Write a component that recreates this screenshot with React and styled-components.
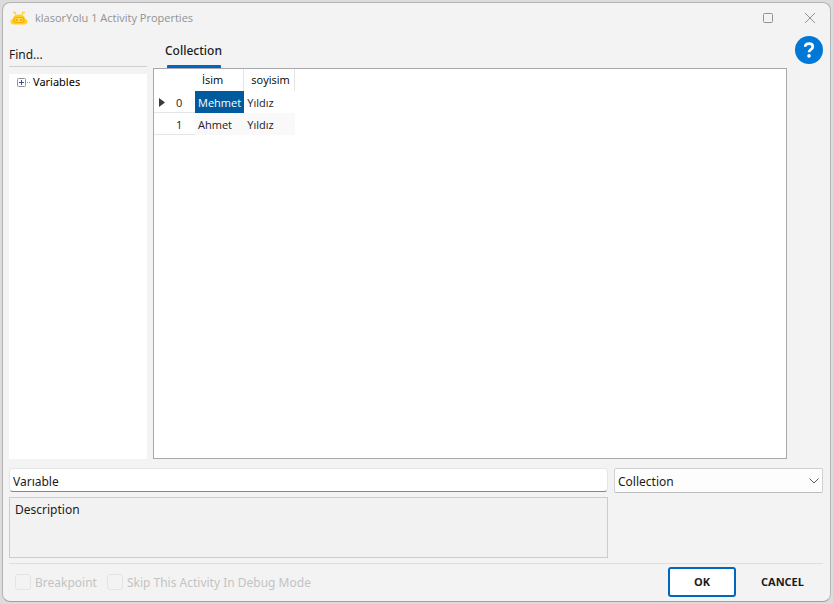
import React, { useState } from 'react'
import styled, { createGlobalStyle } from 'styled-components'

const rows = [
  { isim: 'Mehmet', soyisim: 'Yıldız' },
  { isim: 'Ahmet', soyisim: 'Yıldız' },
]

const RobotIcon = () => (
  <svg width="18" height="18" viewBox="0 0 18 18" fill="none" aria-hidden="true">
    <path d="M3 3.500H5.500V6M15 3.500H12.500V6" stroke="#fbd24a" strokeWidth="1.300" />
    <path d="M3 10C3 7 5.500 5.500 9 5.500s6 1.500 6 4.500c1.700 0 2.500 1 2.500 2.500S16.300 15.500 14 15.500H4C1.700 15.500 .5 14 .5 12.500S1.300 10 3 10z" fill="#ffd21f" />
    <rect x="4" y="8.500" width="10" height="5" rx="2.500" fill="#ffdf5c" stroke="#f5ad00" strokeWidth="1.200" />
    <circle cx="6.800" cy="11" r="1.300" fill="#f5ad00" />
    <circle cx="11.200" cy="11" r="1.300" fill="#f5ad00" />
  </svg>
)

const App = () => {
  const [find, setFind] = useState('')
  const [variable, setVariable] = useState('Varıable')
  const [type, setType] = useState('Collection')

  return (
    <>
      <GlobalStyle />
      <Window>
        <TitleBar>
          <RobotIcon />
          <Title>klasorYolu 1 Activity Properties</Title>
          <WindowButton aria-label="Maximize">
            <svg width="12" height="12" viewBox="0 0 12 12" fill="none" stroke="#929292">
              <rect x="1.5" y="1.5" width="9" height="9" rx="1" />
            </svg>
          </WindowButton>
          <WindowButton aria-label="Close">
            <svg width="12" height="12" viewBox="0 0 12 12" fill="none" stroke="#929292">
              <path d="M1 1L11 11M11 1L1 11" />
            </svg>
          </WindowButton>
        </TitleBar>

        <Main>
          <Sidebar>
            <FindInput
              aria-label="Find"
              placeholder="Find..."
              value={find}
              onChange={(e) => setFind(e.target.value)}
            />
            <Tree>
              <TreeNode>
                <svg width="14" height="9" viewBox="0 0 14 9" fill="none" aria-hidden="true">
                  <rect x="0.5" y="0.5" width="8" height="8" rx="1" fill="#fff" stroke="#929292" />
                  <path d="M2 4.500H7M4.500 2V7" stroke="#34529c" />
                  <path d="M10 4.500H11M12 4.500H13" stroke="#929292" />
                </svg>
                Variables
              </TreeNode>
            </Tree>
          </Sidebar>

          <TabArea>
            <TabBar>
              <Tab>Collection</Tab>
            </TabBar>
            <TabPanel>
              <DataTable>
                <thead>
                  <tr>
                    <Corner />
                    <HeadCell>İsim</HeadCell>
                    <HeadCell>soyisim</HeadCell>
                  </tr>
                </thead>
                <tbody>
                  {rows.map((row, i) => (
                    <Row key={i} $alt={i % 2 === 1}>
                      <RowHead>
                        <RowHeadContent>
                          <svg width="6" height="9" viewBox="0 0 6 9" aria-hidden="true">
                            {i === 0 && <path d="M0 0L6 4.500L0 9z" fill="#3b3b3b" />}
                          </svg>
                          <span>{i}</span>
                        </RowHeadContent>
                      </RowHead>
                      <Cell $selected={i === 0}>{row.isim}</Cell>
                      <Cell>{row.soyisim}</Cell>
                    </Row>
                  ))}
                </tbody>
              </DataTable>
            </TabPanel>
          </TabArea>

          <HelpButton aria-label="Help">
            <svg width="28" height="28" viewBox="0 0 28 28" fill="none">
              <circle cx="14" cy="14" r="14" fill="#0078d7" />
              <path d="M10.200 10.800C10.200 8.600 11.700 7.600 14 7.600s3.800 1.100 3.800 3.100c0 2.900-3.800 2.700-3.800 5.600" stroke="#fff" strokeWidth="2.700" />
              <circle cx="14" cy="19.900" r="1.800" fill="#fff" />
            </svg>
          </HelpButton>
        </Main>

        <Form>
          <TextField
            aria-label="Variable name"
            value={variable}
            onChange={(e) => setVariable(e.target.value)}
          />
          <SelectBox>
            <Select aria-label="Variable type" value={type} onChange={(e) => setType(e.target.value)}>
              <option>Collection</option>
            </Select>
            <svg width="10" height="6" viewBox="0 0 10 6" fill="none" stroke="#5c5c5c" aria-hidden="true">
              <path d="M0.500 0.500L5 5L9.500 0.500" />
            </svg>
          </SelectBox>
          <Description aria-label="Description" defaultValue="Description" />
        </Form>

        <Footer>
          <CheckLabel>
            <Checkbox type="checkbox" disabled />
            Breakpoint
          </CheckLabel>
          <CheckLabel>
            <Checkbox type="checkbox" disabled />
            Skip This Activity In Debug Mode
          </CheckLabel>
          <Buttons>
            <Button $primary>OK</Button>
            <Button>CANCEL</Button>
          </Buttons>
        </Footer>
      </Window>
    </>
  )
}

export default App

/* ---------------- Global ---------------- */

const GlobalStyle = createGlobalStyle`
  * {
    box-sizing: border-box;
  }

  body {
    margin: 0;
    background: #dcdcdc;
    color: #1b1b1b;
    font-family: "Noto Sans", "Open Sans", sans-serif;
    font-size: 12px;
  }

  button, input, select, textarea {
    font: inherit;
    color: inherit;
  }
`

/* ---------------- Window ---------------- */

const Window = styled.div`
  display: flex;
  flex-direction: column;
  min-height: calc(100vh - 4px);
  margin: 2px;
  padding: 0 7px 4px 6px;
  border: 1px solid #b4b4b4;
  border-bottom-color: #a0a0a0;
  border-radius: 8px;
  background: #f3f3f3;
`

const TitleBar = styled.header`
  display: flex;
  align-items: center;
  height: 30px;
  padding-left: 1px;
`

const Title = styled.h1`
  flex: 1;
  margin: 0 0 0 7px;
  color: #929292;
  font-family: "Open Sans", sans-serif;
  font-size: 11px;
  font-weight: 400;
  line-height: 16px;
`

const WindowButton = styled.button`
  display: flex;
  align-items: center;
  justify-content: center;
  width: 26px;
  height: 24px;
  margin-left: 16px;
  padding: 0;
  border: none;
  background: none;
`

/* ---------------- Main ---------------- */

const Main = styled.main`
  display: flex;
  flex: 1;
  gap: 6px;
`

const Sidebar = styled.aside`
  display: flex;
  flex-direction: column;
  flex-shrink: 0;
  gap: 7px;
  width: 138px;
  padding-top: 10px;
`

const FindInput = styled.input`
  width: 100%;
  height: 24px;
  padding: 0;
  border: none;
  border-bottom: 1px solid #cfcfcf;
  background: none;
  outline: none;

  &::placeholder {
    color: #1b1b1b;
    opacity: 1;
  }
`

const Tree = styled.div`
  flex: 1;
  padding: 0 8px;
  background: #fff;
  font-size: 11px;
  line-height: 16px;
`

const TreeNode = styled.div`
  display: flex;
  align-items: center;
  gap: 2px;
  color: #000;
`

const TabArea = styled.section`
  display: flex;
  flex: 1;
  flex-direction: column;
  min-width: 0;
`

const TabBar = styled.div`
  display: flex;
  height: 35px;
  padding-left: 12px;
`

const Tab = styled.button`
  position: relative;
  padding: 0;
  border: none;
  background: none;
  font-size: 12px;
  font-weight: 500;

  &::after {
    content: '';
    position: absolute;
    right: 1px;
    bottom: 0;
    left: 2px;
    height: 3px;
    border-radius: 1px 1px 0 0;
    background: #0067c0;
  }
`

const TabPanel = styled.div`
  flex: 1;
  border: 1px solid #a7a7ad;
  background: #fff;
`

const HelpButton = styled.button`
  align-self: flex-start;
  width: 28px;
  height: 28px;
  margin: 3px 0 0 2px;
  padding: 0;
  border: none;
  border-radius: 50%;
  background: none;

  svg {
    display: block;
  }
`

/* ---------------- Table ---------------- */

const DataTable = styled.table`
  border-collapse: separate;
  border-spacing: 0;
  font-family: "Open Sans", sans-serif;
  font-size: 11px;
  line-height: 16px;
`

const Corner = styled.td`
  width: 41px;
  padding: 0;
`

const HeadCell = styled.th`
  height: 22px;
  padding: 0 4px 0 7px;
  border-right: 1px solid #e5e5e5;
  color: #000;
  font-weight: 400;

  &:nth-child(2) {
    padding-right: 20px;
  }
`

const Row = styled.tr`
  td {
    background: ${({ $alt }) => ($alt ? '#f9f9f9' : '#fff')};
  }
`

const RowHead = styled.th`
  height: 22px;
  padding: 2px 0 0;
  border-bottom: 1px solid #e5e5e5;
  font-weight: 400;
`

const RowHeadContent = styled.div`
  display: flex;
  align-items: center;
  gap: 11px;
  padding-left: 5px;
`

const Cell = styled.td`
  height: 22px;
  padding: 2px 3px 0;

  && {
    ${({ $selected }) => $selected && `
      background: #005a9e;
      color: #fff;
    `}
  }
`

/* ---------------- Form ---------------- */

const Form = styled.section`
  display: grid;
  grid-template-columns: minmax(0, 1fr) 209px;
  column-gap: 6px;
  row-gap: 4px;
  margin-top: 9px;
`

const TextField = styled.input`
  height: 24px;
  padding: 2px 3px 0;
  border: 1px solid #e5e5e5;
  border-bottom-color: #868686;
  border-radius: 4px;
  background: #fff;
`

const SelectBox = styled.div`
  position: relative;

  svg {
    position: absolute;
    top: 10px;
    right: 4px;
    pointer-events: none;
  }
`

const Select = styled.select`
  display: block;
  width: 100%;
  height: 25px;
  padding: 1px 3px 0;
  appearance: none;
  border: 1px solid #d0d0d0;
  border-bottom-color: #bbb;
  border-radius: 2px;
  background: #fdfdfd;
`

const Description = styled.textarea`
  display: block;
  width: 100%;
  height: 61px;
  padding: 3px 5px;
  resize: none;
  border: 1px solid #ccc;
  background: #f2f2f2;
  line-height: 17px;
`

/* ---------------- Footer ---------------- */

const Footer = styled.footer`
  display: flex;
  align-items: center;
  gap: 10px;
  margin-top: 5px;
  padding: 3px 0 0 6px;
  border-top: 1px solid #dedede;
`

const CheckLabel = styled.label`
  display: flex;
  align-items: center;
  gap: 4px;
  color: #c3c3c3;
`

const Checkbox = styled.input`
  width: 16px;
  height: 16px;
  margin: 0;
  appearance: none;
  border: 1px solid #e4e4e4;
  border-radius: 3px;
`

const Buttons = styled.div`
  display: flex;
  gap: 6px;
  margin-left: auto;
`

const Button = styled.button`
  min-width: ${({ $primary }) => ($primary ? '68px' : '81px')};
  height: 30px;
  padding: 0 0 1px;
  border: 2px solid ${({ $primary }) => ($primary ? '#0067c0' : 'transparent')};
  border-radius: 3px;
  background: ${({ $primary }) => ($primary ? '#fff' : 'transparent')};
  font-family: "Open Sans", sans-serif;
  font-size: 11px;
  font-weight: 700;
`
